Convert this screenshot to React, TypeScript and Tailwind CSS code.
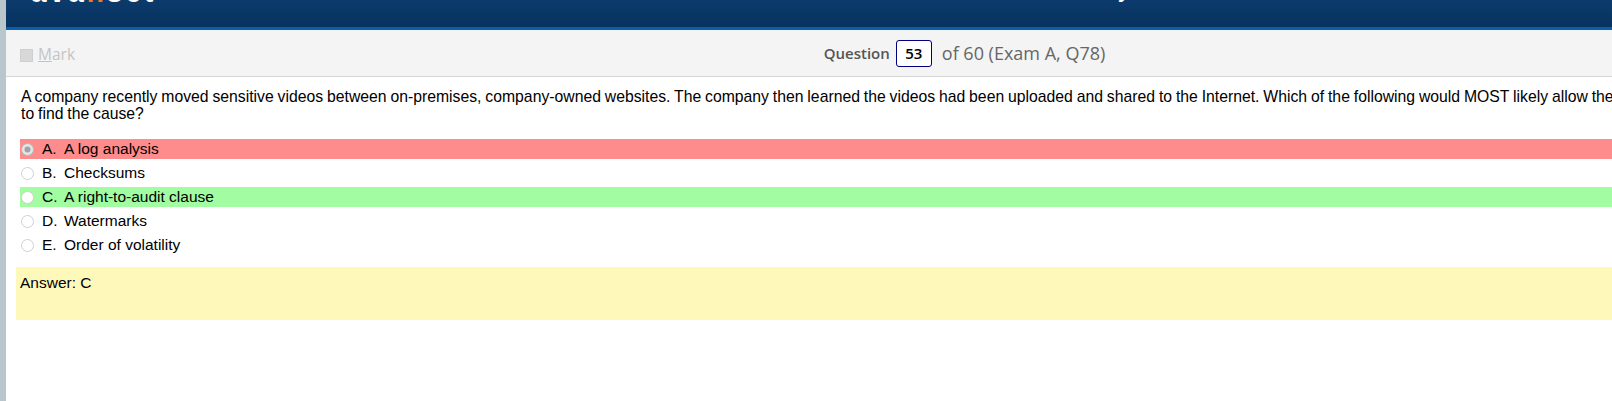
import React from 'react';

const OPTIONS = [
  { key: 'A', text: 'A log analysis', state: 'wrong' },
  { key: 'B', text: 'Checksums', state: '' },
  { key: 'C', text: 'A right-to-audit clause', state: 'right' },
  { key: 'D', text: 'Watermarks', state: '' },
  { key: 'E', text: 'Order of volatility', state: '' },
];

function Radio({ checked }: { checked: boolean }) {
  return (
    <svg width="13" height="13" viewBox="0 0 13 13" className="shrink-0">
      <circle cx="6.5" cy="6.5" r="6" fill={checked ? '#e4e4e4' : '#ffffff'} stroke={checked ? '#b8b8b8' : '#cfcfcf'} />
      {checked && <circle cx="6.5" cy="6.5" r="3" fill="#a3a3a3" />}
    </svg>
  );
}

export default function App() {
  return (
    <div className="w-screen h-screen overflow-hidden bg-[#b9c6cc] pl-[6px]">
      <div className="w-[1903px] h-full bg-white">
        {/* Header strip, scrolled mostly out of view */}
        <div className="h-[27px] bg-gradient-to-b from-[#0c3a6b] to-[#06335f] overflow-hidden relative">
          <div className="absolute left-[25px] -top-[21px] font-['Liberation_Sans',sans-serif] font-bold text-[28px] tracking-[3px] text-white leading-none">
            ava<span className="text-[#f07a1a]">n</span>set
          </div>
          <div className="absolute left-[1031px] -top-[25px] font-['Liberation_Sans',sans-serif] text-[26px] text-white leading-none">
            Security
          </div>
        </div>
        <div className="h-[3px] bg-[#0b5faa]" />

        {/* Question bar */}
        <div className="h-[47px] bg-[#f4f4f4] border-b border-[#d6d6d6] flex items-center font-['Open_Sans',sans-serif]">
          <div className="flex-1 flex items-center pl-[14px] pt-[4px]">
            <span className="w-[13px] h-[13px] bg-[#d8d8d8] border border-[#cfcfcf]" />
            <span className="ml-[5px] text-[15.5px] text-[#c4c4c4]">
              <span className="underline">M</span>ark
            </span>
          </div>
          <div className="flex items-center text-[#666]">
            <span className="text-[15px] font-semibold text-[#555]">Question</span>
            <span className="ml-[6px] w-[36px] h-[27px] border border-[#000080] rounded-[3px] bg-white flex items-center justify-center text-[15px] font-semibold text-black">
              53
            </span>
            <span className="ml-[10px] text-[18px]">of 60 (Exam A, Q78)</span>
          </div>
          <div className="flex-1" />
        </div>

        {/* Content */}
        <div className="pl-[10px] pt-[11px] font-['Liberation_Sans',Arial,sans-serif] text-black">
          <p className="pl-[5px] w-[1672px] text-[15.75px] leading-[17px] [word-spacing:-0.5px]">
            A company recently moved sensitive videos between on-premises, company-owned websites. The company then learned the videos had been uploaded and shared to the Internet. Which of the following would MOST likely allow the company to find the cause?
          </p>

          <div className="mt-[17px] ml-[4px] text-[15.5px]">
            {OPTIONS.map((o) => (
              <div
                key={o.key}
                className={`h-[20px] mb-[4px] flex items-center ${
                  o.state === 'wrong' ? 'bg-[#ff8c8c]' : o.state === 'right' ? 'bg-[#a2fca2]' : ''
                }`}
              >
                <span className="ml-[1px]">
                  <Radio checked={o.state === 'wrong'} />
                </span>
                <span className="ml-[8px] w-[22px]">{o.key}.</span>
                <span>{o.text}</span>
              </div>
            ))}
          </div>

          <div className="mt-[12px] h-[53px] bg-[#fef9bb] pl-[4px] pt-[4px] text-[15.5px]">
            Answer: C
          </div>
        </div>
      </div>
    </div>
  );
}
